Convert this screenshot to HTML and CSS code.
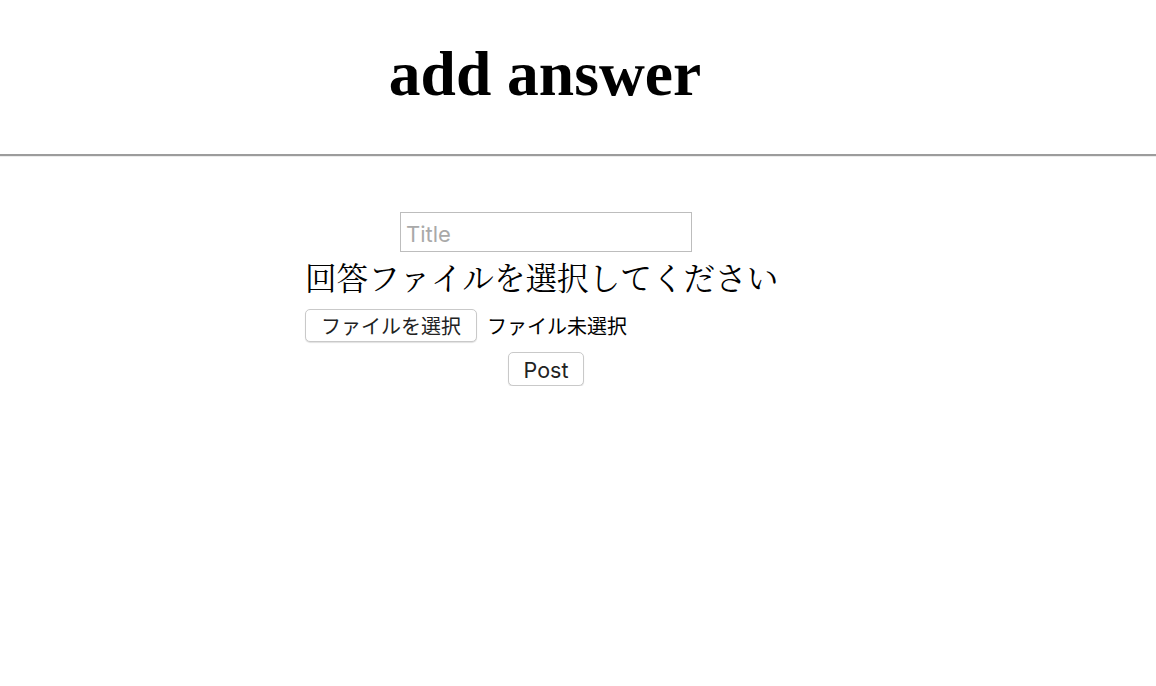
FILE: index.html
```html
<!DOCTYPE html>
<html lang="ja">
<head>
<meta charset="utf-8">
<title>add answer</title>
<link rel="stylesheet" href="styles.css">
</head>
<body>
<header class="header">
  <div class="header-inner">
    <h1 class="title">add answer</h1>
  </div>
</header>
<main class="page">
  <form class="form">
    <input class="title-input" type="text" placeholder="Title">
    <div class="file-block">
      <label class="file-label">回答ファイルを選択してください</label>
      <div class="file-row">
        <span class="btn file-btn">ファイルを選択</span>
        <span class="file-status">ファイル未選択</span>
      </div>
    </div>
    <div class="post-row">
      <button class="btn post-btn" type="button">Post</button>
    </div>
  </form>
</main>
</body>
</html>
```
FILE: styles.css
```css
html, body {
  margin: 0;
  padding: 0;
  background: #fff;
}

body {
  font-family: "Liberation Serif", "Noto Serif CJK JP", "Noto Sans CJK JP", serif;
  color: #000;
}

.header {
  height: 154px;
  border-bottom: 2px solid #9c9c9c;
  box-shadow: 0 1px 0 #ececec;
}

.header-inner {
  width: 1090px;
  text-align: center;
}

.title {
  margin: 0;
  padding-top: 38px;
  font-family: "Liberation Serif", serif;
  font-weight: bold;
  font-size: 63.5px;
  line-height: 72px;
}

.page {
  width: 1092px;
}

.form {
  text-align: center;
  padding-top: 56px;
}

.title-input {
  display: block;
  box-sizing: border-box;
  margin: 0 auto;
  width: 292px;
  height: 40px;
  padding: 3px 5px 0;
  border: 1px solid #bdbdbd;
  border-radius: 0;
  font-family: Inter, "Noto Sans", sans-serif;
  font-size: 22px;
  color: #000;
  outline: none;
}

.title-input::placeholder {
  color: #a9a9a9;
}

.file-block {
  display: inline-block;
  width: 474px;
  margin-right: 8px;
  text-align: left;
}

.file-label {
  display: block;
  margin-top: 4px;
  font-family: "Noto Serif CJK JP", "Liberation Serif", "Noto Sans CJK JP", serif;
  font-size: 31.6px;
  line-height: 42px;
  white-space: nowrap;
}

.file-row {
  display: flex;
  align-items: center;
  margin-top: 11px;
}

.btn {
  box-sizing: border-box;
  display: inline-flex;
  align-items: center;
  justify-content: center;
  background: #fff;
  border: 1px solid #c9c9c9;
  border-radius: 5px;
  box-shadow: 0 1px 1px rgba(0, 0, 0, 0.12);
  color: #222;
  padding: 0;
}

.file-btn {
  width: 172px;
  height: 33px;
  font-family: "Noto Sans CJK JP", sans-serif;
  font-size: 20px;
}

.file-status {
  margin-left: 10px;
  font-family: "Noto Sans CJK JP", sans-serif;
  font-size: 20px;
  color: #000;
}

.post-row {
  margin-top: 10px;
}

.post-btn {
  width: 76px;
  height: 34px;
  font-family: Inter, "Noto Sans", sans-serif;
  font-size: 21.5px;
  padding-top: 2px;
}
```
